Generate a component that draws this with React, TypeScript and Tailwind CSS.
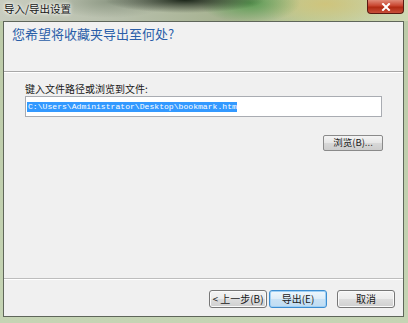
import React from "react";

const cjk = "font-['Noto_Sans_CJK_SC','Noto_Sans',sans-serif]";

function Btn({ children, w, primary }: { children: React.ReactNode; w: string; primary?: boolean }) {
  return (
    <div
      className={`${w} h-[18px] flex items-center justify-center rounded-[3px] border text-[10px] leading-none text-[#1a1a1a] ${cjk} ${
        primary
          ? "border-[#3c8dd0] bg-[linear-gradient(to_bottom,#eef7fd,#dcecf8_50%,#c9e2f5_51%,#bfdcf2)] shadow-[inset_0_0_0_1px_#9fd0f5]"
          : "border-[#777] bg-[linear-gradient(to_bottom,#f4f4f4,#ebebeb_50%,#dddddd_51%,#cfcfcf)] shadow-[inset_0_0_0_1px_#fafafa]"
      }`}
    >
      {children}
    </div>
  );
}

export default function App() {
  return (
    <div className="w-[408px] h-[323px] overflow-hidden flex flex-col bg-[linear-gradient(to_bottom,#bccaa8,#c5d4b4)]">
      {/* Title bar */}
      <div className="h-[21px] flex items-start justify-between bg-[radial-gradient(ellipse_80px_13px_at_185px_0px,#1c261a,rgba(28,38,26,0)),radial-gradient(ellipse_50px_20px_at_250px_3px,#5a9a52,rgba(90,154,82,0)),radial-gradient(ellipse_70px_22px_at_325px_4px,#cfc47c,rgba(207,196,124,0)),radial-gradient(ellipse_60px_16px_at_110px_2px,#8f9a86,rgba(143,154,134,0)),linear-gradient(to_right,#c8ccbf,#b7bfab_30%,#a6b290_55%,#bccb9a_75%,#cfd8b4)]">
        <div className={`pl-[4px] pt-[3px] text-[10.5px] leading-[12px] text-[#161616] [text-shadow:0_0_5px_#fff,0_0_3px_#fff] ${cjk}`}>
          导入/导出设置
        </div>
        <div className="mr-[4px] w-[37px] h-[14px] rounded-b-[4px] border border-t-0 border-[#5a1a12] bg-[linear-gradient(to_bottom,#e08a78,#c8442e_45%,#b02a12_55%,#c8503a)] flex items-center justify-center">
          <svg width="10" height="8" viewBox="0 0 10 8">
            <path d="M2 1 L8 7 M8 1 L2 7" stroke="#fff" strokeWidth="2" strokeLinecap="square" />
          </svg>
        </div>
      </div>

      {/* Client area */}
      <div className="ml-[3px] w-[401px] h-[296px] border border-[#5f665a] bg-[#f0f0f0] flex flex-col">
        {/* header */}
        <div className="h-[50px] border-b border-[#a8a8a8] pl-[8px] pt-[3px] bg-[#f1f1f1]">
          <div className={`text-[13px] leading-[18px] text-[#2a5ea8] ${cjk}`}>您希望将收藏夹导出至何处?</div>
        </div>
        <div className="h-px bg-white" />

        {/* body */}
        <div className="flex-1 flex flex-col pl-[21px] pr-[20px] pt-[9px]">
          <div className={`text-[10px] leading-[13px] text-[#1a1a1a] ${cjk}`}>键入文件路径或浏览到文件:</div>
          <div className="mt-[1px] w-[357px] h-[21px] border border-[#a9acb2] bg-white flex items-center pl-[1px]">
            <span className="bg-[#3399ff] text-white text-[8.1px] leading-[10px] font-['Liberation_Mono',monospace] pl-px">
              C:\Users\Administrator\Desktop\bookmark.htm
            </span>
          </div>
          <div className="mt-[18px] flex justify-end">
            <div className={`w-[60px] h-[16px] flex items-center justify-center rounded-[2px] border border-[#8a8a8a] bg-[linear-gradient(to_bottom,#f4f4f4,#e6e6e6_50%,#d8d8d8_51%,#cdcdcd)] text-[9.5px] leading-none text-[#1a1a1a] ${cjk}`}>
              浏览(B)...
            </div>
          </div>
        </div>

        {/* footer */}
        <div className="h-px bg-[#bdbdbd]" />
        <div className="h-px bg-white" />
        <div className="h-[36px] flex items-start justify-end pt-[10px] pr-[8px]">
          <Btn w="w-[58px]">&lt; 上一步(B)</Btn>
          <div className="w-[2px]" />
          <Btn w="w-[58px]" primary>导出(E)</Btn>
          <div className="w-[10px]" />
          <Btn w="w-[58px]">取消</Btn>
        </div>
      </div>
    </div>
  );
}
